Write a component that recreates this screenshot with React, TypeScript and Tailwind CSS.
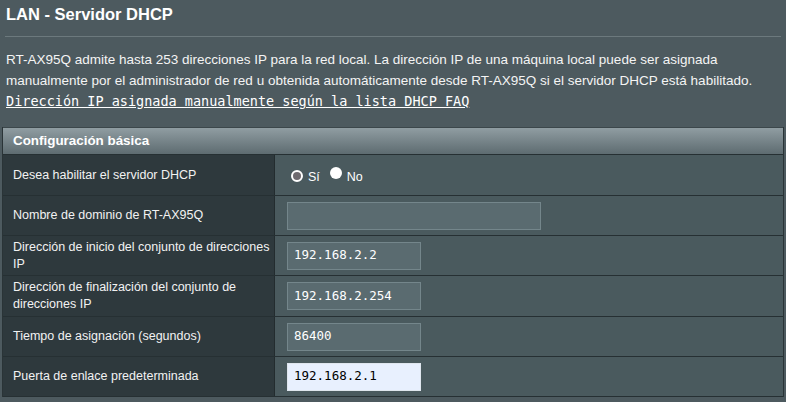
import React from "react";

function Radio({ checked }: { checked: boolean }) {
  return checked ? (
    <span className="inline-block w-[12px] h-[12px] rounded-full bg-white" />
  ) : (
    <span className="inline-block w-[12px] h-[12px] rounded-full border-2 border-white bg-[#6e6a6f]" />
  );
}

function Row({
  label,
  children,
  tall,
}: {
  label: React.ReactNode;
  children?: React.ReactNode;
  tall?: boolean;
}) {
  return (
    <div
      className={
        "flex border-t border-[#263033] " + (tall ? "h-[41px]" : "h-[40px]")
      }
    >
      <div className="w-[272px] shrink-0 bg-[#2e393d] border-r border-[#232c2f] pl-[10px] pr-[4px] flex items-center text-[12.5px] leading-[17px] text-[#f2f2f2]">
        <span>{label}</span>
      </div>
      <div className="flex-1 bg-[#4a5a5e] pl-[12px] flex items-center">
        {children}
      </div>
    </div>
  );
}

function Field({
  value,
  wide,
  light,
}: {
  value?: string;
  wide?: boolean;
  light?: boolean;
}) {
  return (
    <div
      className={
        "h-[28px] flex items-center pl-[6px] font-['DejaVu_Sans_Mono',monospace] text-[12.5px] " +
        (wide ? "w-[254px] " : "w-[134px] ") +
        (light
          ? "bg-[#e8f0fe] border border-[#dfe6ee] text-black"
          : "bg-[#5a6b70] border border-[#74868b] text-white")
      }
    >
      {value}
    </div>
  );
}

export default function App() {
  return (
    <div className="w-[786px] h-[402px] overflow-hidden bg-[#4d5a5f] text-white font-['Liberation_Sans',Arial,sans-serif]">
      <h1 className="pl-[6px] pt-[4px] text-[16.5px] leading-[20px] font-bold">
        LAN - Servidor DHCP
      </h1>
      <div className="mx-[5px] mt-[12px] h-px bg-[#6c797d]" />
      <div className="px-[6px] mt-[12px] text-[13.5px] leading-[21px] text-[#f4f4f4]">
        RT-AX95Q admite hasta 253 direcciones IP para la red local. La dirección IP de una máquina local puede ser asignada
        <br />
        manualmente por el administrador de red u obtenida automáticamente desde RT-AX95Q si el servidor DHCP está habilitado.
        <br />
        <a className="font-['DejaVu_Sans_Mono',monospace] underline text-white">
          Dirección IP asignada manualmente según la lista DHCP FAQ
        </a>
      </div>
      <div className="mx-[2px] mt-[15px] border-x border-[#2a3437]">
        <div className="h-[27px] bg-gradient-to-b from-[#909da2] to-[#5e6c71] pl-[10px] flex items-center font-bold text-[13.4px] border-t border-[#3c474b]">
          Configuración básica
        </div>
        <Row label="Desea habilitar el servidor DHCP" tall>
          <div className="flex items-center text-[12.5px] pt-[1px] ml-[4px]">
            <Radio checked={false} />
            <span className="ml-[5px] mt-[4px]">Sí</span>
            <span className="ml-[10px]">
              <Radio checked />
            </span>
            <span className="ml-[5px] mt-[4px]">No</span>
          </div>
        </Row>
        <Row label="Nombre de dominio de RT-AX95Q">
          <Field wide />
        </Row>
        <Row label="Dirección de inicio del conjunto de direcciones IP">
          <Field value="192.168.2.2" />
        </Row>
        <Row label="Dirección de finalización del conjunto de direcciones IP" tall>
          <Field value="192.168.2.254" />
        </Row>
        <Row label="Tiempo de asignación (segundos)">
          <Field value="86400" />
        </Row>
        <Row label="Puerta de enlace predeterminada">
          <Field value="192.168.2.1" light />
        </Row>
        <div className="border-t border-[#263033]" />
      </div>
    </div>
  );
}
